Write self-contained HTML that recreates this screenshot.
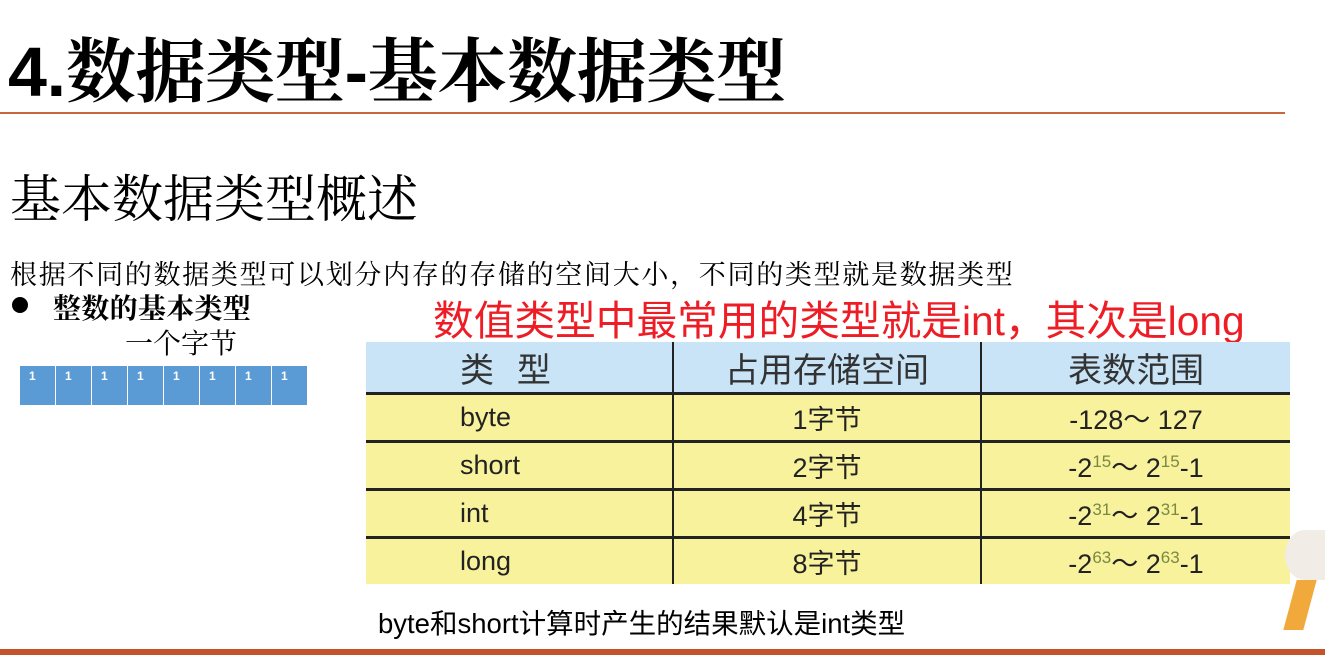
<!DOCTYPE html>
<html><head><meta charset="utf-8"><style>
body{margin:0;width:1325px;height:671px;background:#fff;position:relative;overflow:hidden;font-family:"Liberation Sans","Noto Sans CJK SC",sans-serif;color:#000}
.a{position:absolute;white-space:nowrap}
.t{font-family:"Liberation Sans","Noto Serif CJK SC",serif}
table{position:absolute;left:366px;top:342px;width:924px;border-collapse:collapse}
td{border-left:2px solid #222;border-right:2px solid #222;border-top:3px solid #222;text-align:center;font-size:27px;color:#222;height:45px;padding:0;background:#f8f29c}
tr:first-child td{background:#c8e4f6;height:50px;border-top:none;font-size:34px;font-family:"Noto Sans CJK SC",sans-serif;color:#333}
td:first-child{border-left:none;text-align:left;padding-left:94px}
td:last-child{border-right:none}
sup{font-size:17px;color:#7a8a40}
.b{position:absolute;top:366px;width:35px;height:39px;background:#5b9bd5;border-right:1px solid #fff;color:#fff;font-size:12px;font-weight:bold}
.b span{position:absolute;left:9px;top:3px}
</style></head><body>
<div class="a t" style="left:8px;top:16px;font-size:70px;font-weight:bold;letter-spacing:-0.3px">4.数据类型-基本数据类型</div>
<div class="a" style="left:0;top:112px;width:1285px;height:2px;background:#c8683a"></div>
<div class="a t" style="left:10px;top:158px;font-size:51px">基本数据类型概述</div>
<div class="a t" style="left:10px;top:253px;font-size:27px;letter-spacing:1.7px">根据不同的数据类型可以划分内存的存储的空间大小，不同的类型就是数据类型</div>
<div class="a" style="left:12px;top:297px;width:16px;height:16px;border-radius:50%;background:#000"></div>
<div class="a t" style="left:53px;top:287px;font-size:28px;font-weight:bold;letter-spacing:0.3px">整数的基本类型</div>
<div class="a t" style="left:125px;top:322px;font-size:28px">一个字节</div>
<div class="b" style="left:20px"><span>1</span></div><div class="b" style="left:56px"><span>1</span></div><div class="b" style="left:92px"><span>1</span></div><div class="b" style="left:128px"><span>1</span></div><div class="b" style="left:164px"><span>1</span></div><div class="b" style="left:200px"><span>1</span></div><div class="b" style="left:236px"><span>1</span></div><div class="b" style="left:272px"><span>1</span></div>
<div class="a" style="left:433px;top:288px;font-size:40.7px;color:#ee1c24">数值类型中最常用的类型就是int，其次是long</div>
<table>
<tr><td style="width:212px">类&nbsp;&nbsp;&nbsp;型</td><td style="width:306px">占用存储空间</td><td>表数范围</td></tr>
<tr><td>byte</td><td>1字节</td><td>-128～ 127</td></tr>
<tr><td>short</td><td>2字节</td><td>-2<sup>15</sup>～ 2<sup>15</sup>-1</td></tr>
<tr><td>int</td><td>4字节</td><td>-2<sup>31</sup>～ 2<sup>31</sup>-1</td></tr>
<tr><td>long</td><td>8字节</td><td>-2<sup>63</sup>～ 2<sup>63</sup>-1</td></tr>
</table>
<div class="a" style="left:378px;top:601px;font-size:27.5px">byte和short计算时产生的结果默认是int类型</div>
<div class="a" style="left:0;top:649px;width:1325px;height:6px;background:#c4522a"></div>
<div class="a" style="left:1285px;top:530px;width:40px;height:50px;border-radius:50% 0 0 50%;background:#f1ede6"></div>
<div class="a" style="left:1290px;top:580px;width:20px;height:50px;background:#f2a93b;transform:skewX(-15deg)"></div>
</body></html>
